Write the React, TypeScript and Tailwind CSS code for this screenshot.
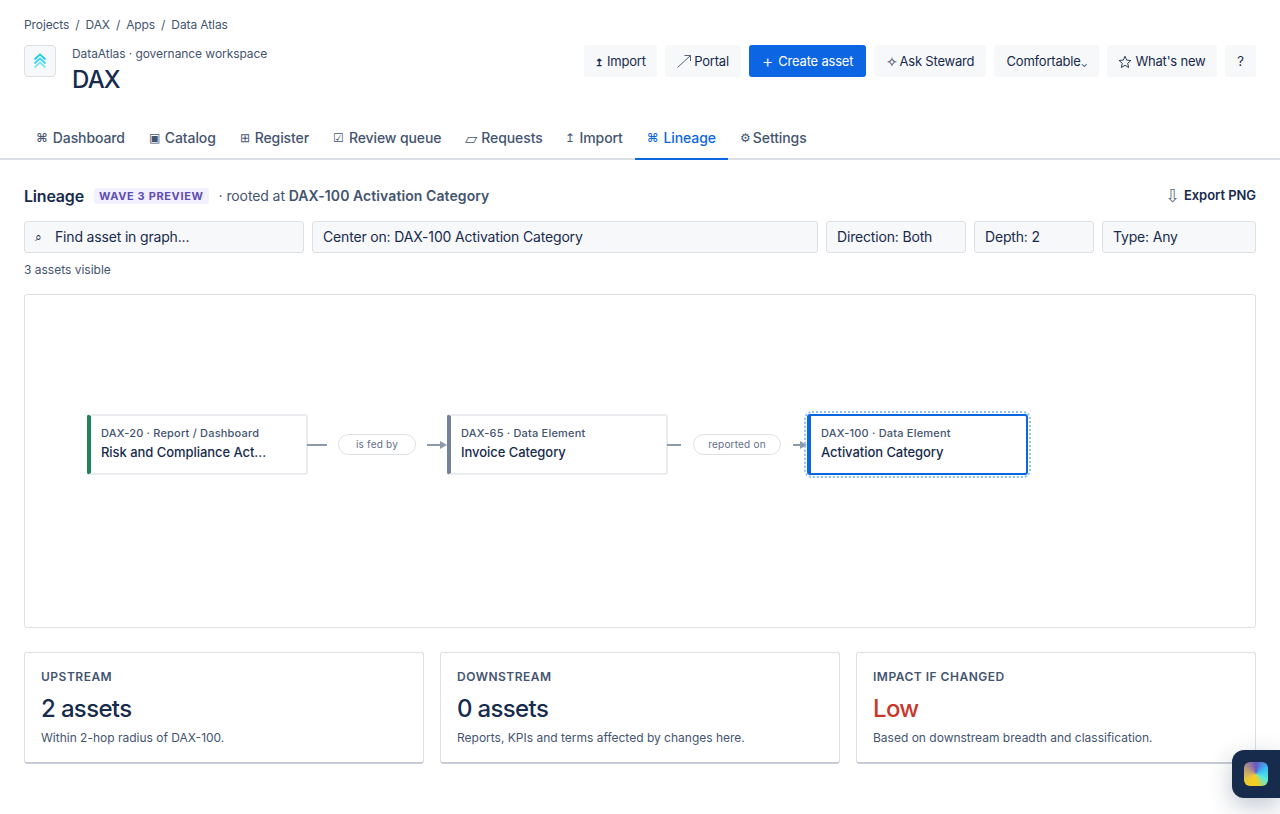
import { Fragment, type ReactNode } from "react";

function PortalArrow() {
  return (
    <svg width="14" height="13" viewBox="0 0 14 13" fill="none" stroke="#44546f" strokeWidth="0.9">
      <path d="M0.5 12.5 13.5 0.5M7.5 0.5h6v5.5" />
    </svg>
  );
}

function StarIcon() {
  return (
    <svg width="14" height="14" viewBox="0 0 14 14" fill="none" stroke="#172b4d" strokeWidth="0.9">
      <path d="M7 1.2 8.7 5.1l4.2.4-3.2 2.8.95 4.2L7 10.3l-3.65 2.2.95-4.2L1.1 5.5l4.2-.4z" />
    </svg>
  );
}

const actions: { icon?: ReactNode; label: string; width: string; primary?: boolean }[] = [
  { icon: <span className="text-[10px] font-semibold leading-none mr-[1px]">↥</span>, label: "Import", width: "w-[73px]" },
  { icon: <PortalArrow />, label: "Portal", width: "w-[76px]" },
  { icon: <span className="text-lg font-light leading-none mr-[2px]">+</span>, label: "Create asset", width: "w-[117px]", primary: true },
  { icon: <span className="text-sm leading-none mr-[-1px]">✧</span>, label: "Ask Steward", width: "w-[112px]" },
  { label: "Comfortable", width: "w-[105px]" },
  { icon: <StarIcon />, label: "What's new", width: "w-[110px]" },
  { label: "?", width: "w-[31px]" },
];

const tabs = [
  { icon: "⌘", label: "Dashboard", cls: "px-3 gap-[5px]", size: "text-xs" },
  { icon: "▣", label: "Catalog", cls: "px-3 gap-[5px]", size: "text-xs" },
  { icon: "⊞", label: "Register", cls: "px-3 gap-[5px]", size: "text-xs" },
  { icon: "☑", label: "Review queue", cls: "px-3 gap-[5px]", size: "text-xs" },
  { icon: "▱", label: "Requests", cls: "pl-3 pr-[10px] gap-1", size: "text-base" },
  { icon: "↥", label: "Import", cls: "px-3 gap-[5px]", size: "text-xs" },
  { icon: "⌘", label: "Lineage", cls: "px-3 gap-[5px]", size: "text-xs", active: true },
  { icon: "⚙", label: "Settings", cls: "px-3 gap-[2px]", size: "text-xs" },
];

const filters = [
  { label: "Center on: DAX-100 Activation Category", width: "flex-1" },
  { label: "Direction: Both", width: "w-[140px]" },
  { label: "Depth: 2", width: "w-[120px]" },
  { label: "Type: Any", width: "w-[154px]" },
];

const stats = [
  { title: "UPSTREAM", value: "2 assets", note: "Within 2-hop radius of DAX-100.", color: "text-[#172b4d]" },
  { title: "DOWNSTREAM", value: "0 assets", note: "Reports, KPIs and terms affected by changes here.", color: "text-[#172b4d]" },
  { title: "IMPACT IF CHANGED", value: "Low", note: "Based on downstream breadth and classification.", color: "text-[#c9372c]" },
];

function Logo() {
  return (
    <svg width="14" height="16" viewBox="0 0 14 16" fill="none" strokeWidth="1.8">
      <path d="M1.5 6.5 7 1.5l5.5 5" stroke="#22cfe6" />
      <path d="M1.5 10.5 7 5.5l5.5 5" stroke="#3fd6ee" />
      <path d="M1.5 14.5 7 9.5l5.5 5" stroke="#7fe6f5" />
    </svg>
  );
}

function Node({ meta, name, accent }: { meta: string; name: string; accent: string }) {
  return (
    <div className={`w-[221px] h-[61px] shrink-0 bg-white rounded-[3px] border-2 border-[#ebecf0] border-l-4 ${accent} pl-[10px] pr-3 pb-[3px] flex flex-col justify-center`}>
      <div className="text-[11px] leading-[14px] font-medium text-[#44546f] tracking-[0.2px]">{meta}</div>
      <div className="text-[13px] leading-[18px] mt-[3px] font-medium tracking-[-0.05px] text-[#172b4d] truncate">{name}</div>
    </div>
  );
}

function Edge({ label, pill, line }: { label: string; pill: string; line: string }) {
  return (
    <div className="w-[140px] ml-[-1px] shrink-0 flex items-center justify-between">
      <div className={`${line} h-[2px] shrink-0 bg-[#8c9bab]`} />
      <div className={`${pill} h-[21px] shrink-0 rounded-full border border-[#dcdfe4] bg-white flex items-center justify-center text-[10px] text-[#626f86] tracking-[0.2px]`}>
        {label}
      </div>
      <div className={`${line} flex items-center shrink-0`}>
        <div className="flex-1 h-[2px] bg-[#8c9bab]" />
        <div className="w-0 h-0 border-y-[4px] border-y-transparent border-l-[7px] border-l-[#8c9bab]" />
      </div>
    </div>
  );
}

export default function App() {
  return (
    <div className="relative h-[814px] overflow-hidden bg-white text-[#172b4d] font-['Inter',sans-serif]">
      {/* Header */}
      <div className="px-6 pt-[17px]">
        <div className="flex items-center gap-[6px] text-xs leading-4 text-[#44546f] tracking-[-0.1px]">
          {["Projects", "DAX", "Apps", "Data Atlas"].map((crumb, i) => (
            <Fragment key={crumb}>
              {i > 0 && <span>/</span>}
              <span>{crumb}</span>
            </Fragment>
          ))}
        </div>
        <div className="flex justify-between mt-[12px] h-[64px]">
          <div className="flex">
            <div className="w-8 h-8 rounded-[4px] border border-[#dcdfe4] bg-[#f7f8f9] flex items-center justify-center">
              <Logo />
            </div>
            <div className="ml-4">
              <div className="text-xs leading-[18px] text-[#44546f] tracking-[-0.07px]">DataAtlas · governance workspace</div>
              <h1 className="text-2xl leading-8 font-medium mt-[1px] tracking-[-0.8px]">DAX</h1>
            </div>
          </div>
          <div className="flex gap-2 h-8">
            {actions.map((a) => (
              <button
                key={a.label}
                className={`${a.width} h-8 rounded-[3px] text-[13px] tracking-[-0.2px] pt-[1px] flex items-center justify-center gap-[3px] ${a.primary ? "bg-[#0c66e4] text-white" : "bg-[#f7f8f9] text-[#172b4d]"}`}
              >
                {a.icon}
                {a.label}
                {a.label === "Comfortable" && <span className="text-[9px] leading-none mt-[4px] ml-[-3px] mr-[-1px]">⌄</span>}
              </button>
            ))}
          </div>
        </div>
      </div>

      {/* Tabs */}
      <div className="mt-[13px] h-[38px] px-6 border-b-2 border-[#dcdfe4] flex">
        {tabs.map((t) => (
          <div
            key={t.label}
            className={`h-[38px] pb-1 flex items-center ${t.cls} text-sm font-medium tracking-[-0.1px] border-b-2 ${t.active ? "text-[#0c66e4] border-[#0c66e4]" : "text-[#44546f] border-transparent"}`}
          >
            <span className={`${t.size} leading-none`}>{t.icon}</span>
            {t.label}
          </div>
        ))}
      </div>

      <div className="px-6">
        {/* Title row */}
        <div className="flex items-center justify-between mt-[26px] h-5">
          <div className="flex items-center">
            <span className="text-base font-semibold tracking-[-0.2px]">Lineage</span>
            <span className="ml-[10px] px-[5px] h-4 rounded-[3px] bg-[#f3f0ff] text-[#5e4db2] text-[11px] leading-4 font-bold tracking-[0.65px]">WAVE 3 PREVIEW</span>
            <span className="ml-[10px] text-sm text-[#44546f] tracking-[-0.1px]">· rooted at <span className="font-semibold tracking-[0.08px]">DAX-100 Activation Category</span></span>
          </div>
          <div className="flex items-center gap-1 text-[13px] font-semibold tracking-[-0.05px]">
            <span className="text-lg font-normal text-[#626f86] leading-none">⇩</span>
            Export PNG
          </div>
        </div>

        {/* Filters */}
        <div className="flex gap-2 mt-[15px]">
          <div className="w-[280px] h-8 rounded-[3px] border border-[#dcdfe4] bg-[#f7f8f9] flex items-center pl-[10px] text-sm tracking-[-0.17px]">
            <span className="w-5 text-xs leading-none">⌕</span>
            Find asset in graph...
          </div>
          {filters.map((f) => (
            <div key={f.label} className={`${f.width} h-8 rounded-[3px] border border-[#dcdfe4] bg-[#f7f8f9] flex items-center px-[10px] text-sm tracking-[-0.17px]`}>
              {f.label}
            </div>
          ))}
        </div>
        <div className="mt-[9px] text-xs leading-4 text-[#44546f]">3 assets visible</div>

        {/* Graph */}
        <div className="mt-4 h-[334px] rounded-[3px] border border-[#dcdfe4] pl-[62px] pt-[119px]">
          <div className="flex">
            <Node meta="DAX-20 · Report / Dashboard" name="Risk and Compliance Act..." accent="border-l-[#1f845a]" />
            <Edge label="is fed by" pill="w-[78px]" line="w-5" />
            <Node meta="DAX-65 · Data Element" name="Invoice Category" accent="border-l-[#758195]" />
            <Edge label="reported on" pill="w-[88px]" line="w-[14px]" />
            <div className="rounded-[5px] outline-2 outline-dotted outline-offset-[1px] outline-[#8fbfff]">
              <Node meta="DAX-100 · Data Element" name="Activation Category" accent="!border-[#0c66e4] border-l-4" />
            </div>
          </div>
        </div>

        {/* Stats */}
        <div className="grid grid-cols-3 gap-4 mt-6">
          {stats.map((s) => (
            <div key={s.title} className="h-[112px] rounded-[3px] border border-[#dcdfe4] border-b-2 border-b-[#c7ccd4] bg-white px-4 pt-4">
              <div className="text-xs leading-4 font-semibold text-[#44546f] tracking-[0.5px]">{s.title}</div>
              <div className={`mt-[8px] text-2xl leading-8 font-[450] tracking-[-0.65px] ${s.color}`}>{s.value}</div>
              <div className="mt-[5px] text-xs leading-4 text-[#44546f]">{s.note}</div>
            </div>
          ))}
        </div>
      </div>

      {/* Floating launcher */}
      <div className="absolute right-0 top-[750px] w-12 h-12 rounded-l-xl bg-[#172b4d] shadow-[0_8px_24px_rgba(9,30,66,0.25)] flex items-center pl-3">
        <div className="w-6 h-6 rounded-md bg-[conic-gradient(#6a55c8,#38bdf8,#5eead4,#facc15,#e8c93a,#b8977e,#6a55c8)]" />
      </div>
    </div>
  );
}
